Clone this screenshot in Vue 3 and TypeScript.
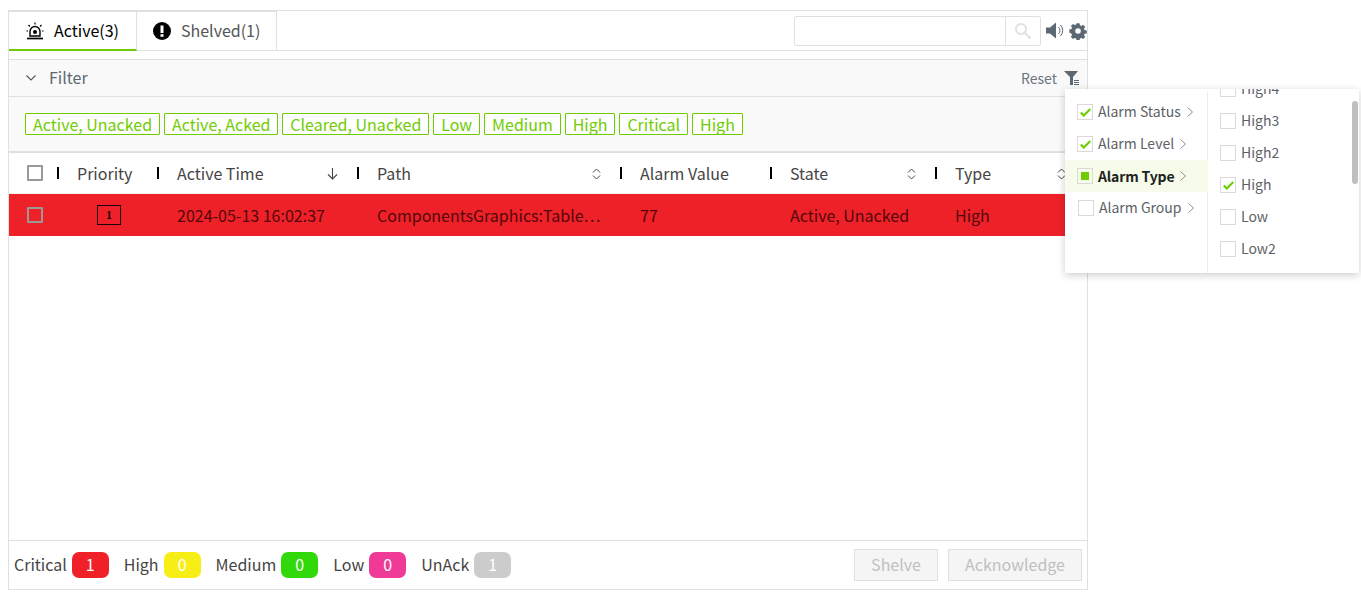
<script setup lang="ts">
interface Col { label: string; width: number; sort?: 'none' | 'down'; cell: string }
const tags = ['Active, Unacked', 'Active, Acked', 'Cleared, Unacked', 'Low', 'Medium', 'High', 'Critical', 'High']
const cols: Col[] = [
  { label: 'Priority', width: 100, cell: '' },
  { label: 'Active Time', width: 200, sort: 'down', cell: '2024-05-13 16:02:37' },
  { label: 'Path', width: 263, sort: 'none', cell: 'ComponentsGraphics:Table⋯' },
  { label: 'Alarm Value', width: 150, cell: '77' },
  { label: 'State', width: 165, sort: 'none', cell: 'Active, Unacked' },
  { label: 'Type', width: 150, sort: 'none', cell: 'High' },
]
const stats = [
  { label: 'Critical', value: 1, color: '#ef2028' },
  { label: 'High', value: 0, color: '#f6ee15' },
  { label: 'Medium', value: 0, color: '#31d90b' },
  { label: 'Low', value: 0, color: '#ef3a98' },
  { label: 'UnAck', value: 1, color: '#cccccc' },
]
const menu = [
  { label: 'Alarm Status', state: 'check' },
  { label: 'Alarm Level', state: 'check' },
  { label: 'Alarm Type', state: 'part', active: true },
  { label: 'Alarm Group', state: 'none' },
]
const sub = [
  { label: 'High4', state: 'none' },
  { label: 'High3', state: 'none' },
  { label: 'High2', state: 'none' },
  { label: 'High', state: 'check' },
  { label: 'Low', state: 'none' },
  { label: 'Low2', state: 'none' },
]
</script>

<template>
  <div class="page">
    <div class="panel">
      <div class="topbar">
        <div class="tab tab-active">
          <svg width="18" height="18" viewBox="0 0 18 18" fill="none" stroke="#000" stroke-width="1.4">
            <path d="M1 16.500h16" stroke-width="1.700" />
            <path d="M4 14V9.500a5 5 0 0 1 10 0V14z" />
            <circle cx="9" cy="10" r="2" fill="#000" stroke="none" />
            <path d="M9 0.500v2M2.500 3l1.500 1.500M15.500 3L14 4.500M0.500 9h1.500M16 9h1.500" stroke-width="1.200" />
          </svg>
          <span class="tab-text">Active(3)</span>
        </div>
        <div class="tab tab-plain">
          <svg width="18" height="18" viewBox="0 0 18 18">
            <circle cx="9" cy="9" r="9" fill="#000" />
            <rect x="7.500" y="3.500" width="3" height="7.500" fill="#fff" />
            <rect x="7.500" y="12.200" width="3" height="2.600" fill="#fff" />
          </svg>
          <span class="tab-text">Shelved(1)</span>
        </div>
        <div class="tools">
          <div class="search">
            <div class="search-input"></div>
            <div class="search-btn">
              <svg width="18" height="18" viewBox="0 0 18 18" fill="none" stroke="#e1e1e1" stroke-width="2">
                <circle cx="7" cy="7" r="5" />
                <path d="M11 11l5.500 5.500" />
              </svg>
            </div>
          </div>
          <svg class="sound" width="19" height="17" viewBox="0 0 19 17" fill="#5c6873">
            <path d="M0 5.500h4L10 0.500v16l-6-5H0z" />
            <path d="M12.500 5a5 5 0 0 1 0 7M14.500 3a8 8 0 0 1 0 11" fill="none" stroke="#5c6873" stroke-width="1" />
          </svg>
          <svg class="gear" width="18" height="18" viewBox="0 0 18 18" fill="#5c6873">
            <path fill-rule="evenodd" d="M7.300 0h3.400l.5 2.400 1.500.7 2.100-1.300 2.400 2.400-1.300 2.100.6 1.500 2.500.5v3.400l-2.500.5-.6 1.500 1.300 2.100-2.400 2.400-2.100-1.300-1.500.6-.5 2.500H7.300l-.5-2.500-1.500-.6-2.100 1.300-2.400-2.400 1.300-2.100-.6-1.500L-1 10.700V7.300l2.500-.5.600-1.500L.800 3.200l2.400-2.400 2.100 1.300 1.500-.7zM9 5.800a3.200 3.200 0 1 0 0 6.400 3.200 3.200 0 0 0 0-6.400z" transform="translate(1.200 1.200) scale(.87)" />
          </svg>
        </div>
      </div>

      <div class="filter">
        <div class="filter-head">
          <svg class="chev" width="10" height="6" viewBox="0 0 10 6" fill="none" stroke="#555" stroke-width="1.100">
            <path d="M.5.500L5 5 9.500.5" />
          </svg>
          <span class="filter-title">Filter</span>
          <span class="reset">Reset</span>
          <svg class="funnel" width="15" height="14" viewBox="0 0 15 14">
            <path d="M0 0h14L9 6v8H6V6z" fill="#5c6873" />
            <path d="M10 9.500h5M10 11.500h5M10 13.500h5" stroke="#5c6873" stroke-width="1" />
          </svg>
        </div>
        <div class="tags">
          <span v-for="(t, i) in tags" :key="i" class="tag">{{ t }}</span>
        </div>
      </div>

      <div class="thead">
        <div class="check-cell"><span class="box box-head"></span></div>
        <div v-for="c in cols" :key="c.label" class="th" :style="{ width: c.width + 'px' }">
          <i class="bar"></i>
          <span class="th-label">{{ c.label }}</span>
          <svg v-if="c.sort === 'none'" class="sort" width="9" height="12" viewBox="0 0 9 12" fill="none" stroke="#444" stroke-width="1">
            <path d="M1 4.500L4.500 1 8 4.500M1 7.500L4.500 11 8 7.500" />
          </svg>
          <svg v-else-if="c.sort === 'down'" class="sort sort-down" width="11" height="12" viewBox="0 0 11 12" fill="none" stroke="#444" stroke-width="1.100">
            <path d="M5.500 0v11M1 6.500L5.500 11 10 6.500" />
          </svg>
        </div>
      </div>
      <div class="row">
        <div class="check-cell"><span class="box box-row"></span></div>
        <div v-for="c in cols" :key="c.label" class="td" :style="{ width: c.width + 'px' }">
          <span v-if="c.label === 'Priority'" class="prio">1</span>
          <span v-else class="td-text">{{ c.cell }}</span>
        </div>
      </div>

      <div class="spacer"></div>

      <div class="footer">
        <template v-for="s in stats" :key="s.label">
          <span class="stat-label">{{ s.label }}</span>
          <span class="pill" :style="{ background: s.color }">{{ s.value }}</span>
        </template>
        <div class="actions">
          <button class="btn btn-shelve">Shelve</button>
          <button class="btn btn-ack">Acknowledge</button>
        </div>
      </div>
    </div>

    <div class="popup">
      <div class="pop-left">
        <div v-for="m in menu" :key="m.label" class="pop-item" :class="{ on: m.active }">
          <span class="cb" :class="{ shift: m.state === 'none' }">
            <svg v-if="m.state === 'check'" width="11" height="9" viewBox="0 0 11 9" fill="none" stroke="#6fcc00" stroke-width="2.200">
              <path d="M.8 4.500l3 3L10.300 1" />
            </svg>
            <i v-else-if="m.state === 'part'" class="part"></i>
          </span>
          <span class="pop-label" :class="{ shift: m.state === 'none' }">{{ m.label }}</span>
          <svg class="arr" width="6" height="10" viewBox="0 0 6 10" fill="none" stroke="#8c8c8c" stroke-width="1">
            <path d="M.5.500L5.500 5 .5 9.500" />
          </svg>
        </div>
      </div>
      <div class="pop-right">
        <div class="sub-list">
          <div v-for="s in sub" :key="s.label" class="sub-item">
            <span class="cb">
              <svg v-if="s.state === 'check'" width="11" height="9" viewBox="0 0 11 9" fill="none" stroke="#6fcc00" stroke-width="2.200">
                <path d="M.8 4.500l3 3L10.300 1" />
              </svg>
            </span>
            <span class="pop-label">{{ s.label }}</span>
          </div>
        </div>
        <i class="thumb"></i>
      </div>
    </div>
  </div>
</template>

<style>
html, body { margin: 0; background: #fff; }
</style>

<style scoped>
.page {
  position: relative;
  width: 1361px;
  height: 594px;
  padding: 10px 8px 4px;
  box-sizing: border-box;
  overflow: hidden;
  font-family: "Noto Sans CJK JP", "Noto Sans", sans-serif;
  font-size: 16px;
  color: #333;
}
.panel {
  width: 1080px;
  height: 580px;
  box-sizing: border-box;
  border: 1px solid #e0e0e0;
  display: flex;
  flex-direction: column;
}
.topbar {
  height: 40px;
  flex: none;
  box-sizing: border-box;
  border-bottom: 1px solid #e0e0e0;
  display: flex;
}
.tab {
  height: 40px;
  box-sizing: border-box;
  display: flex;
  align-items: center;
  border-top: 1px solid #e0e0e0;
}
.tab-text { padding-bottom: 2px; }
.tab-active {
  width: 128px;
  padding-left: 17px;
  gap: 10px;
  color: #000;
  border-bottom: 2px solid #6fcc00;
  border-right: 1px solid #e0e0e0;
}
.tab-plain {
  width: 140px;
  padding-left: 16px;
  gap: 10px;
  color: #555;
  border-right: 1px solid #e0e0e0;
  border-bottom: 1px solid #e0e0e0;
}
.tools {
  margin-left: auto;
  display: flex;
  align-items: center;
  height: 39px;
}
.search {
  width: 247px;
  height: 30px;
  box-sizing: border-box;
  border: 1px solid #e0e0e0;
  border-radius: 2px;
  display: flex;
}
.search-input { flex: 1; }
.search-btn {
  width: 34px;
  border-left: 1px solid #e0e0e0;
  display: flex;
  align-items: center;
  justify-content: center;
}
.sound { margin-left: 5px; margin-right: 1px; }
.gear { margin-left: 3px; margin-right: 0; }
.filter {
  margin-top: 8px;
  height: 94px;
  flex: none;
  box-sizing: border-box;
  background: #f9f9f9;
  border-top: 1px solid #e0e0e0;
  border-bottom: 2px solid #e0e0e0;
}
.filter-head {
  height: 37px;
  box-sizing: border-box;
  border-bottom: 1px solid #e0e0e0;
  display: flex;
  align-items: center;
  padding: 0 8px 0 17px;
}
.filter-title { margin-left: 13px; color: #5c6873; padding-bottom: 2px; }
.reset { margin-left: auto; font-size: 14px; color: #6b7580; }
.funnel { margin-left: 7px; }
.tags {
  display: flex;
  gap: 3.900px;
  padding: 16px 16px 0;
}
.tag {
  height: 22px;
  box-sizing: border-box;
  border: 1px solid #6fcc00;
  border-radius: 1px;
  padding: 0 7px;
  color: #6fcc00;
  font-size: 16px;
  line-height: 21px;
  background: #fff;
}
.thead, .row { display: flex; flex: none; }
.thead { height: 41px; border-bottom: 1px solid #f0f0f0; box-sizing: border-box; }
.row {
  height: 42px;
  background: #ee2129;
  color: #52070a;
}
.check-cell {
  width: 48px;
  flex: none;
  display: flex;
  align-items: center;
  padding-left: 18px;
  box-sizing: border-box;
}
.box {
  width: 16px;
  height: 16px;
  box-sizing: border-box;
  border: 2px solid #999;
  border-radius: 1px;
  display: block;
}
.box-head { margin-top: -1px; }
.th {
  flex: none;
  box-sizing: border-box;
  display: flex;
  align-items: center;
  position: relative;
  padding-left: 20px;
  color: #444;
}
.bar {
  position: absolute;
  left: 0;
  top: 14px;
  width: 2px;
  height: 12px;
  background: #000;
}
.th-label { white-space: nowrap; }
.sort { position: absolute; right: 19px; top: 15px; }
.sort-down { right: 19px; top: 15px; }
.td {
  flex: none;
  box-sizing: border-box;
  display: flex;
  align-items: center;
  padding-left: 20px;
  white-space: nowrap;
}
.td-text { white-space: nowrap; }
.prio {
  width: 24px;
  height: 20px;
  margin-left: 20px;
  margin-top: -1px;
  box-sizing: border-box;
  border: 1px solid #1a0506;
  font-family: "Liberation Serif", serif;
  font-size: 12px;
  font-weight: 700;
  line-height: 18px;
  text-align: center;
  color: #1a0506;
}
.spacer { flex: 1; }
.footer {
  height: 49px;
  flex: none;
  box-sizing: border-box;
  border-top: 1px solid #e0e0e0;
  display: flex;
  align-items: center;
  padding: 0 5px;
}
.stat-label { color: #444; margin-right: 5px; line-height: 22px; padding-bottom: 2px; }
.pill {
  width: 37px;
  height: 26px;
  border-radius: 7px;
  color: #fff;
  text-align: center;
  line-height: 24px;
  margin-right: 15px;
}
.actions { margin-left: auto; display: flex; gap: 10px; }
.btn {
  height: 32px;
  box-sizing: border-box;
  border: 1px solid #e0e0e0;
  background: #f5f5f5;
  color: #c0c0c0;
  font: inherit;
  padding: 0 0 2px;
}
.btn-shelve { width: 84px; }
.btn-ack { width: 134px; }
.popup {
  position: absolute;
  left: 1065px;
  top: 89px;
  width: 294px;
  height: 184px;
  background: #fff;
  box-shadow: 0 2px 8px rgba(0, 0, 0, .2);
  display: flex;
  font-size: 14px;
  color: #5c6268;
}
.pop-left {
  width: 143px;
  flex: none;
  box-sizing: border-box;
  border-right: 1px solid #ececec;
  padding-top: 5px;
  height: 182px;
  margin-top: 2px;
}
.pop-item {
  height: 32px;
  display: flex;
  align-items: center;
  padding-left: 12px;
  white-space: nowrap;
}
.pop-item .pop-label { padding-bottom: 2px; }
.pop-item.on {
  background: #f6fce9;
  color: #222;
  font-weight: 700;
  margin-right: -1px;
}
.pop-item.on .pop-label { padding-bottom: 0; letter-spacing: -.15px; }
.cb {
  width: 16px;
  height: 16px;
  box-sizing: border-box;
  border: 1px solid #d9d9d9;
  flex: none;
  display: flex;
  align-items: center;
  justify-content: center;
}
.cb.shift { margin-left: 1px; }
.part { width: 8px; height: 8px; background: #6fcc00; display: block; }
.pop-label { margin-left: 5px; }
.arr { margin-left: 6px; }
.pop-right {
  flex: 1;
  position: relative;
  overflow: hidden;
}
.sub-list { margin-top: -16px; padding-left: 12px; }
.sub-item {
  height: 32px;
  display: flex;
  align-items: center;
}
.sub-item .pop-label { padding-bottom: 2px; }
.thumb {
  position: absolute;
  right: 1px;
  top: 12px;
  width: 6px;
  height: 83px;
  border-radius: 3px;
  background: #bdbfc1;
}
</style>
